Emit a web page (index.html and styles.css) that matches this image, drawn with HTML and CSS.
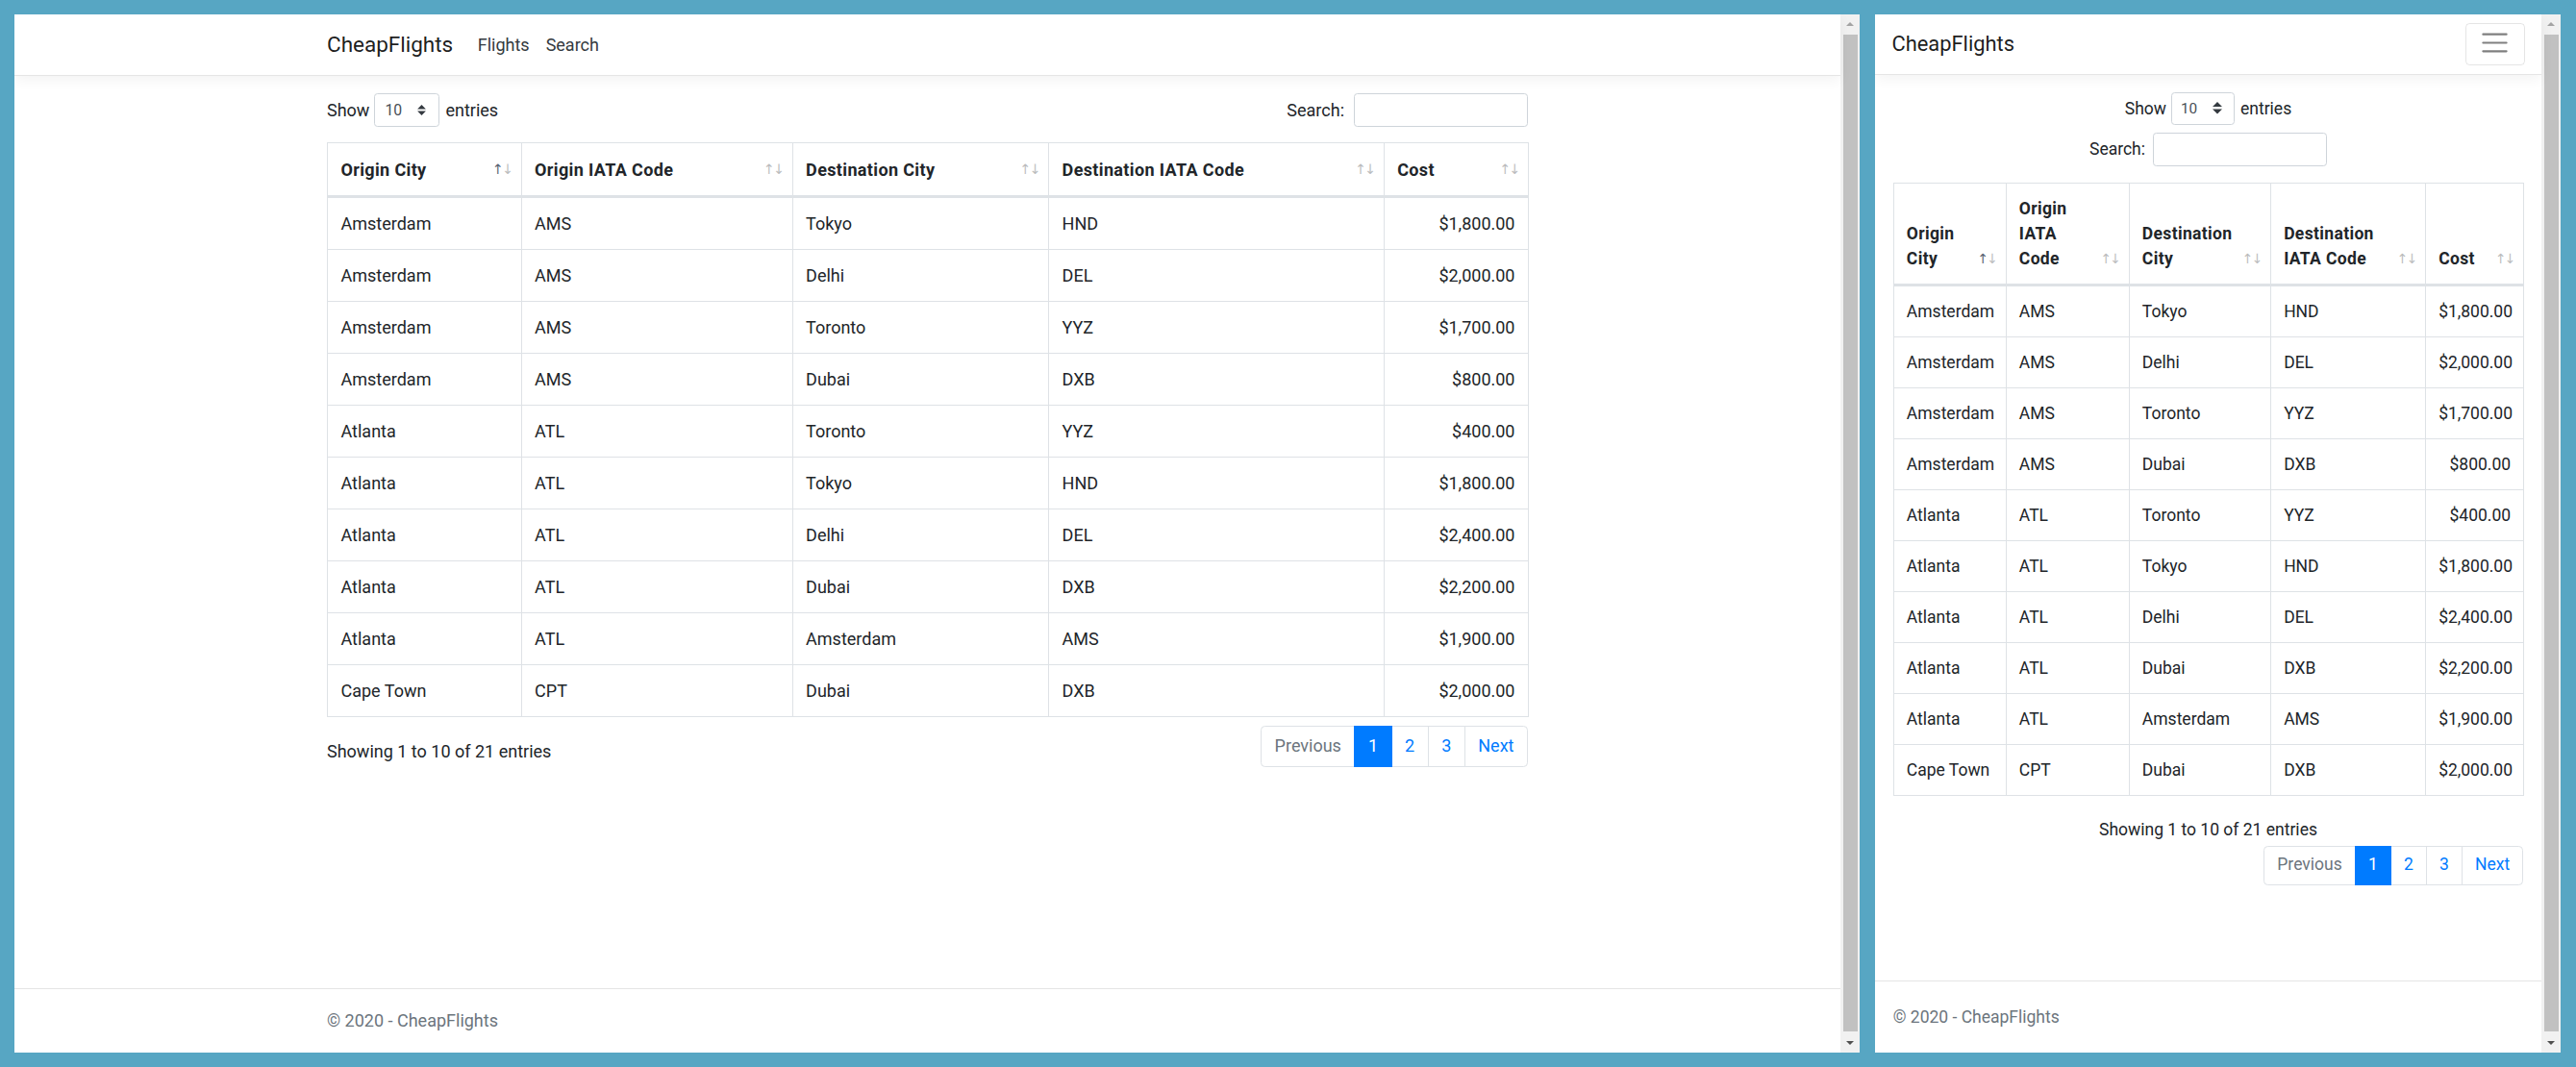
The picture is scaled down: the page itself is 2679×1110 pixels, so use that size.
FILE: index.html
```html
<!DOCTYPE html>
<html lang="en">
<head>
<meta charset="utf-8">
<title>CheapFlights</title>
<link rel="stylesheet" href="styles.css">
</head>
<body>
<div class="screen">

  <!-- Large window -->
  <div class="window win-lg">
    <div class="viewport">
      <header class="navbar">
        <div class="nav-inner">
          <span class="brand">CheapFlights</span>
          <ul class="nav-links">
            <li class="nav-link">Flights</li>
            <li class="nav-link">Search</li>
          </ul>
        </div>
      </header>
      <main class="content">
        <div class="dt-top">
          <div class="dt-length">Show<span class="select">10<svg viewBox="0 0 4 5"><path fill="#343a40" d="M2 0L0 2h4zm0 5L0 3h4z"/></svg></span>entries</div>
          <div class="dt-filter">Search:<span class="input"></span></div>
        </div>
        <table class="table">
          <colgroup><col class="c1"><col class="c2"><col class="c3"><col class="c4"><col class="c5"></colgroup>
          <thead>
            <tr><th class="asc">Origin City</th><th>Origin IATA Code</th><th>Destination City</th><th>Destination IATA Code</th><th>Cost</th></tr>
          </thead>
          <tbody>
            <tr><td>Amsterdam</td><td>AMS</td><td>Tokyo</td><td>HND</td><td class="num">$1,800.00</td></tr>
            <tr><td>Amsterdam</td><td>AMS</td><td>Delhi</td><td>DEL</td><td class="num">$2,000.00</td></tr>
            <tr><td>Amsterdam</td><td>AMS</td><td>Toronto</td><td>YYZ</td><td class="num">$1,700.00</td></tr>
            <tr><td>Amsterdam</td><td>AMS</td><td>Dubai</td><td>DXB</td><td class="num">$800.00</td></tr>
            <tr><td>Atlanta</td><td>ATL</td><td>Toronto</td><td>YYZ</td><td class="num">$400.00</td></tr>
            <tr><td>Atlanta</td><td>ATL</td><td>Tokyo</td><td>HND</td><td class="num">$1,800.00</td></tr>
            <tr><td>Atlanta</td><td>ATL</td><td>Delhi</td><td>DEL</td><td class="num">$2,400.00</td></tr>
            <tr><td>Atlanta</td><td>ATL</td><td>Dubai</td><td>DXB</td><td class="num">$2,200.00</td></tr>
            <tr><td>Atlanta</td><td>ATL</td><td>Amsterdam</td><td>AMS</td><td class="num">$1,900.00</td></tr>
            <tr><td>Cape Town</td><td>CPT</td><td>Dubai</td><td>DXB</td><td class="num">$2,000.00</td></tr>
          </tbody>
        </table>
        <div class="dt-bottom">
          <div class="info">Showing 1 to 10 of 21 entries</div>
          <ul class="pagination">
            <li class="page disabled">Previous</li>
            <li class="page active">1</li>
            <li class="page">2</li>
            <li class="page">3</li>
            <li class="page">Next</li>
          </ul>
        </div>
      </main>
      <footer class="footer"><div class="footer-inner">&copy; 2020 - CheapFlights</div></footer>
    </div>
    <div class="scrollbar">
      <div class="sb-btn"><span class="arrow-up"></span></div>
      <div class="sb-thumb"></div>
      <div class="sb-btn"><span class="arrow-down"></span></div>
    </div>
  </div>

  <!-- Small window -->
  <div class="window win-sm">
    <div class="viewport">
      <header class="navbar">
        <div class="nav-inner">
          <span class="brand">CheapFlights</span>
          <span class="toggler"><svg viewBox="0 0 30 30"><path stroke="rgba(0,0,0,0.5)" stroke-width="2" stroke-linecap="round" stroke-miterlimit="10" d="M4 7h22M4 15h22M4 23h22"/></svg></span>
        </div>
      </header>
      <main class="content">
        <div class="dt-top">
          <div class="dt-length">Show<span class="select">10<svg viewBox="0 0 4 5"><path fill="#343a40" d="M2 0L0 2h4zm0 5L0 3h4z"/></svg></span>entries</div>
          <div class="dt-filter">Search:<span class="input"></span></div>
        </div>
        <table class="table">
          <colgroup><col class="c1"><col class="c2"><col class="c3"><col class="c4"><col class="c5"></colgroup>
          <thead>
            <tr><th class="asc">Origin<br>City</th><th>Origin<br>IATA<br>Code</th><th>Destination<br>City</th><th>Destination<br>IATA Code</th><th>Cost</th></tr>
          </thead>
          <tbody>
            <tr><td>Amsterdam</td><td>AMS</td><td>Tokyo</td><td>HND</td><td class="num">$1,800.00</td></tr>
            <tr><td>Amsterdam</td><td>AMS</td><td>Delhi</td><td>DEL</td><td class="num">$2,000.00</td></tr>
            <tr><td>Amsterdam</td><td>AMS</td><td>Toronto</td><td>YYZ</td><td class="num">$1,700.00</td></tr>
            <tr><td>Amsterdam</td><td>AMS</td><td>Dubai</td><td>DXB</td><td class="num">$800.00</td></tr>
            <tr><td>Atlanta</td><td>ATL</td><td>Toronto</td><td>YYZ</td><td class="num">$400.00</td></tr>
            <tr><td>Atlanta</td><td>ATL</td><td>Tokyo</td><td>HND</td><td class="num">$1,800.00</td></tr>
            <tr><td>Atlanta</td><td>ATL</td><td>Delhi</td><td>DEL</td><td class="num">$2,400.00</td></tr>
            <tr><td>Atlanta</td><td>ATL</td><td>Dubai</td><td>DXB</td><td class="num">$2,200.00</td></tr>
            <tr><td>Atlanta</td><td>ATL</td><td>Amsterdam</td><td>AMS</td><td class="num">$1,900.00</td></tr>
            <tr><td>Cape Town</td><td>CPT</td><td>Dubai</td><td>DXB</td><td class="num">$2,000.00</td></tr>
          </tbody>
        </table>
        <div class="dt-bottom">
          <div class="info">Showing 1 to 10 of 21 entries</div>
          <ul class="pagination">
            <li class="page disabled">Previous</li>
            <li class="page active">1</li>
            <li class="page">2</li>
            <li class="page">3</li>
            <li class="page">Next</li>
          </ul>
        </div>
      </main>
      <footer class="footer"><div class="footer-inner">&copy; 2020 - CheapFlights</div></footer>
    </div>
    <div class="scrollbar">
      <div class="sb-btn"><span class="arrow-up"></span></div>
      <div class="sb-thumb"></div>
      <div class="sb-btn"><span class="arrow-down"></span></div>
    </div>
  </div>

</div>
</body>
</html>
```

FILE: styles.css
```css
* { box-sizing: border-box; }
html, body { margin: 0; padding: 0; }
body {
  background: #57a6c3;
  font-family: Roboto, "Liberation Sans", sans-serif;
  color: #212529;
}

.screen {
  display: flex;
  gap: 16px;
  padding: 15px 16px 15px 15px;
  height: 1110px;
}

.window {
  display: flex;
  background: #fff;
  height: 1080px;
  overflow: hidden;
}
.win-lg { width: 1919px; }
.win-sm { width: 713px; }

.viewport {
  flex: 1;
  min-width: 0;
  display: flex;
  flex-direction: column;
}

/* scrollbar */
.scrollbar {
  width: 20px;
  background: #f1f1f1;
  display: flex;
  flex-direction: column;
}
.sb-btn {
  height: 20px;
  display: flex;
  align-items: center;
  justify-content: center;
}
.sb-thumb {
  flex: 1;
  background: #c1c1c1;
  margin: 1px 2px 2px 3px;
}
.arrow-up {
  width: 0; height: 0;
  border-left: 4px solid transparent;
  border-right: 4px solid transparent;
  border-bottom: 4px solid #a3a3a3;
}
.arrow-down {
  width: 0; height: 0;
  border-left: 4px solid transparent;
  border-right: 4px solid transparent;
  border-top: 4px solid #505050;
}

/* navbar */
.navbar {
  background: #fff;
  border-bottom: 1px solid #e5e5e5;
  box-shadow: 0 4.5px 13.5px rgba(0, 0, 0, 0.05);
  position: relative;
  z-index: 1;
}
.nav-inner { display: flex; align-items: center; }
.brand { color: rgba(0, 0, 0, 0.9); white-space: nowrap; }
.nav-links { display: flex; list-style: none; margin: 0; padding: 0; }
.nav-link { color: #343a40; }

.win-lg .navbar { padding: 9px 0; margin-bottom: 18px; }
.win-lg .nav-inner { width: 1249px; margin: 0 auto; }
.win-lg .brand { font-size: 22.5px; line-height: 33.75px; padding: 5.625px 0; margin-right: 17px; }
.win-lg .nav-link { font-size: 18px; line-height: 27px; padding: 9px 8.5px; }

.win-sm .navbar { padding: 8.75px 17.5px; margin-bottom: 17.5px; }
.win-sm .nav-inner { justify-content: space-between; }
.win-sm .brand { font-size: 21.875px; line-height: 32.8px; padding: 5.47px 0; margin-top: 1px; }
.toggler {
  width: 62px;
  height: 44px;
  border: 1px solid rgba(0, 0, 0, 0.1);
  border-radius: 4.4px;
  display: flex;
  align-items: center;
  justify-content: center;
}
.toggler svg { width: 33px; height: 33px; display: block; margin-top: -3px; }

/* content */
.content { flex: 1; }
.win-lg .content { width: 1249px; margin: 0 auto; font-size: 18px; line-height: 27px; }
.win-sm .content { width: 100%; padding: 0 18.75px; font-size: 17.5px; line-height: 26px; }

.dt-length, .dt-filter { display: flex; align-items: center; white-space: nowrap; }
.select {
  display: flex;
  align-items: center;
  justify-content: space-between;
  border: 1px solid #ced4da;
  border-radius: 3.6px;
  background: #fff;
  color: #495057;
}
.input {
  display: block;
  border: 1px solid #ced4da;
  border-radius: 3.6px;
  background: #fff;
}

.win-lg .dt-top { display: flex; justify-content: space-between; align-items: center; height: 35px; }
.win-lg .select { width: 68px; height: 35px; font-size: 15.75px; padding: 0 13.5px 0 10px; margin: 0 6px 0 5px; }
.win-lg .select svg { width: 9px; height: 11px; }
.win-lg .input { width: 181px; height: 35px; margin-left: 10px; }

.win-sm .dt-top { display: flex; flex-direction: column; align-items: center; }
.win-sm .select { width: 66px; height: 34px; font-size: 15.3px; padding: 0 12.5px 0 9px; margin: 0 6px 0 5px; }
.win-sm .select svg { width: 10px; height: 12.5px; }
.win-sm .dt-filter { margin-top: 8px; }
.win-sm .input { width: 181px; height: 35px; margin-left: 8px; }

/* table */
.table {
  width: 100%;
  border-collapse: collapse;
  table-layout: fixed;
}
.table th, .table td {
  border: 1px solid #dee2e6;
  text-align: left;
}
.table th {
  font-weight: 700;
  letter-spacing: 0.02em;
  vertical-align: bottom;
  position: relative;
  border-bottom-width: 3px;
}
.table td { vertical-align: top; }
.table td.num { text-align: right; }

.table th::before,
.table th::after {
  position: absolute;
  bottom: 0.9em;
  font-weight: 400;
  letter-spacing: 0;
  opacity: 0.3;
  font-family: "DejaVu Sans", sans-serif;
  font-size: 0.8em;
}
.table th::before { content: "\2191"; right: 1.25em; }
.table th::after { content: "\2193"; right: 0.55em; }
.table th.asc::before { opacity: 0.85; color: #3d4a5c; }

.win-lg .table { margin-top: 16px; }
.win-lg .table th { padding: 13.5px 30px 13.5px 13.5px; }
.win-lg .table td { padding: 13px 13.5px; }
.win-lg .c1 { width: 201.6px; }
.win-lg .c2 { width: 282px; }
.win-lg .c3 { width: 266.5px; }
.win-lg .c4 { width: 348.6px; }
.win-lg .c5 { width: 150.3px; }

.win-sm .table { margin-top: 17px; }
.win-sm .table th { padding: 13px 37.5px 13px 13.1px; }
.win-sm .table td { padding: 13px 13.1px; }
.win-sm .c1 { width: 117px; }
.win-sm .c2 { width: 128px; }
.win-sm .c3 { width: 147.3px; }
.win-sm .c4 { width: 161px; }
.win-sm .c5 { width: 102.2px; }

/* bottom */
.pagination { display: flex; list-style: none; margin: 0; padding: 0; }
.page {
  border: 1px solid #dee2e6;
  margin-left: -1px;
  color: #007bff;
  background: #fff;
}
.page:first-child { margin-left: 0; border-radius: 4.5px 0 0 4.5px; }
.page:last-child { border-radius: 0 4.5px 4.5px 0; }
.page.disabled { color: #6c757d; }
.page.active { background: #007bff; border-color: #007bff; color: #fff; position: relative; z-index: 1; }

.win-lg .dt-bottom { display: flex; justify-content: space-between; align-items: flex-start; margin-top: 9px; }
.win-lg .info { padding-top: 13px; }
.win-lg .page { font-size: 18px; line-height: 22.5px; padding: 9px 13.5px; }

.win-sm .dt-bottom { display: flex; flex-direction: column; margin-top: 7.5px; }
.win-sm .info { padding-top: 15px; text-align: center; }
.win-sm .pagination { align-self: flex-end; margin-top: 3.5px; }
.win-sm .page { font-size: 17.5px; line-height: 21.9px; padding: 8.75px 13.1px; }

/* footer */
.footer {
  border-top: 1px solid #e5e5e5;
  color: #6c757d;
  white-space: nowrap;
}
.win-lg .footer { line-height: 66px; font-size: 18px; }
.win-lg .footer-inner { width: 1249px; margin: 0 auto; }
.win-sm .footer { line-height: 74px; font-size: 17.5px; padding: 0 18.75px; }
```
